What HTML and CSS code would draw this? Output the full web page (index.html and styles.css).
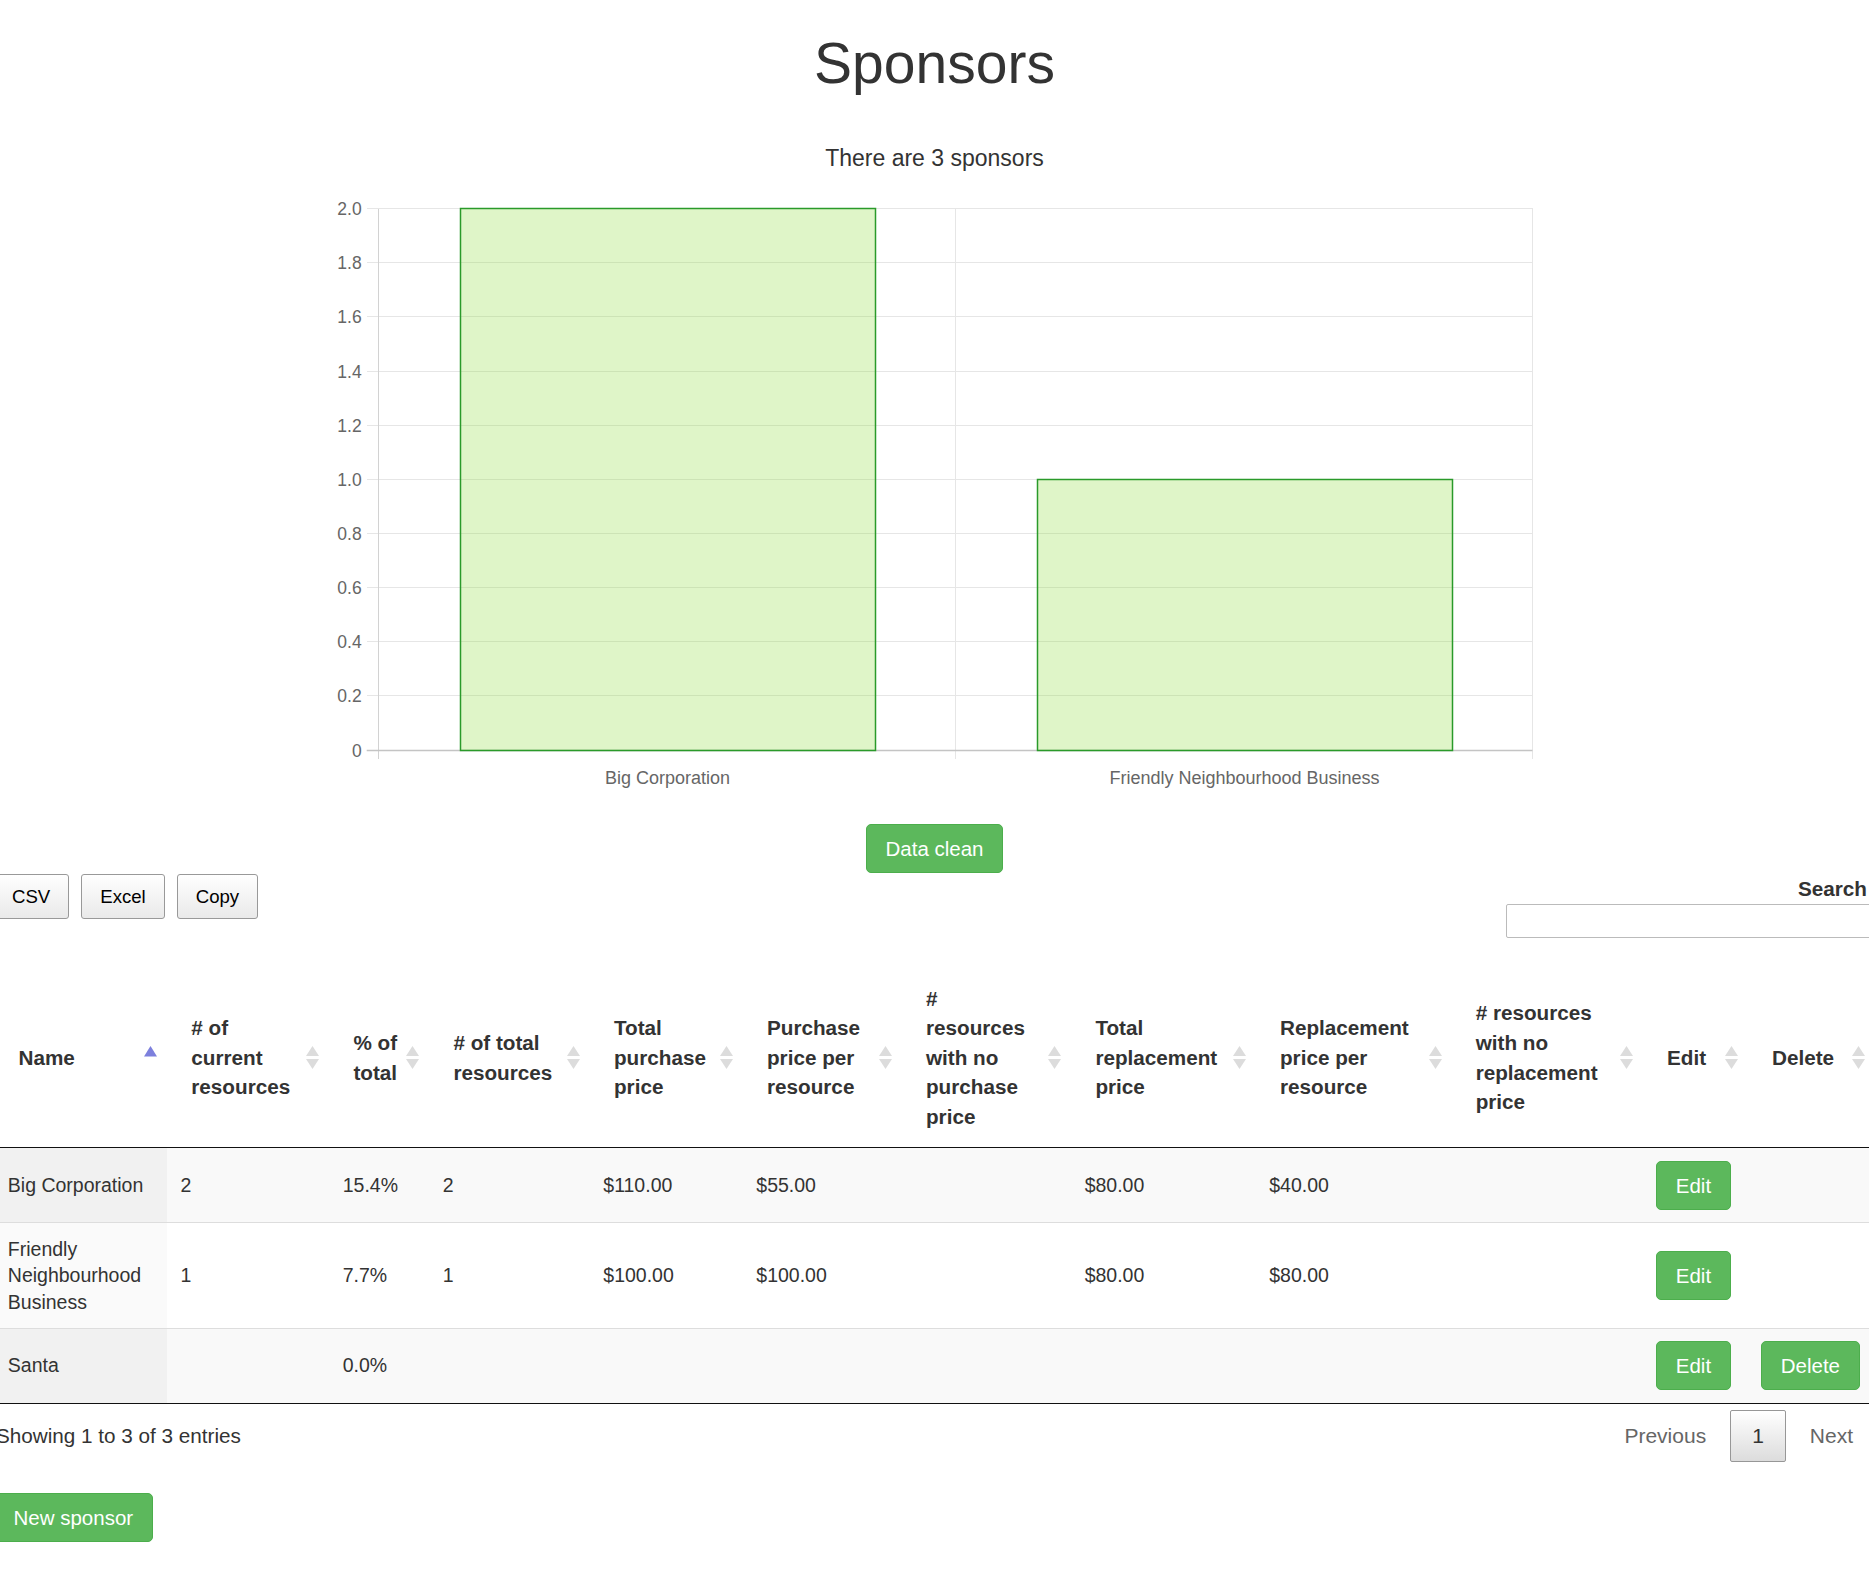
FILE: index.html
```html
<!DOCTYPE html>
<html lang="en">
<head>
  <meta charset="UTF-8" />
  <title>Sponsors</title>
  <link rel="stylesheet" href="styles.css">
</head>
<body>
  <h1 class="page-title">Sponsors</h1>

  <div class="chart">
    <p class="chart-title">There are 3 sponsors</p>
    <svg width="1300" height="620" viewBox="0 0 1300 620">
      <g class="grid">
        <line x1="81.7" y1="18.5" x2="1247.5" y2="18.5" />
        <line x1="81.7" y1="72.5" x2="1247.5" y2="72.5" />
        <line x1="81.7" y1="126.5" x2="1247.5" y2="126.5" />
        <line x1="81.7" y1="181.5" x2="1247.5" y2="181.5" />
        <line x1="81.7" y1="235.5" x2="1247.5" y2="235.5" />
        <line x1="81.7" y1="289.5" x2="1247.5" y2="289.5" />
        <line x1="81.7" y1="343.5" x2="1247.5" y2="343.5" />
        <line x1="81.7" y1="397.5" x2="1247.5" y2="397.5" />
        <line x1="81.7" y1="451.5" x2="1247.5" y2="451.5" />
        <line x1="81.7" y1="505.5" x2="1247.5" y2="505.5" />
        <line x1="670.5" y1="18.5" x2="670.5" y2="569" />
        <line x1="1247.5" y1="18.5" x2="1247.5" y2="569" />
      </g>
      <line class="axis" x1="93.5" y1="18.5" x2="93.5" y2="569" />
      <line class="zero" x1="81.7" y1="560.5" x2="1247.5" y2="560.5" />

      <rect class="bar" x="175.5" y="18.5" width="415" height="542" />
      <rect class="bar" x="752.5" y="289.5" width="415" height="271" />

      <g class="ticks-y">
        <text x="76.7" y="24.5">2.0</text>
        <text x="76.7" y="78.5">1.8</text>
        <text x="76.7" y="132.5">1.6</text>
        <text x="76.7" y="187.5">1.4</text>
        <text x="76.7" y="241.5">1.2</text>
        <text x="76.7" y="295.5">1.0</text>
        <text x="76.7" y="349.5">0.8</text>
        <text x="76.7" y="403.5">0.6</text>
        <text x="76.7" y="457.5">0.4</text>
        <text x="76.7" y="511.5">0.2</text>
        <text x="76.7" y="566.5">0</text>
      </g>
      <g class="ticks-x">
        <text x="382.5" y="594">Big Corporation</text>
        <text x="959.5" y="594">Friendly Neighbourhood Business</text>
      </g>
    </svg>
  </div>

  <div class="actions">
    <a href="#" class="btn btn-green">Data clean</a>
  </div>

  <div class="table-wrap">
    <div class="table-top">
      <div class="dt-buttons">
        <button class="dt-button">CSV</button>
        <button class="dt-button">Excel</button>
        <button class="dt-button">Copy</button>
      </div>
      <div class="dt-filter">
        <label for="search">Search</label>
        <input type="search" id="search" />
      </div>
    </div>

    <table class="sponsors">
      <colgroup>
        <col style="width: 172.8px">
        <col style="width: 162.1px">
        <col style="width: 100px">
        <col style="width: 160.6px">
        <col style="width: 153px">
        <col style="width: 159px">
        <col style="width: 169.4px">
        <col style="width: 184.6px">
        <col style="width: 195.7px">
        <col style="width: 191.3px">
        <col style="width: 105px">
        <col>
      </colgroup>
      <thead>
        <tr>
          <th>Name<span class="sort"><svg width="13" height="23" viewBox="0 0 13 23"><path d="M0 10.5 L6.5 0 L13 10.5Z" fill="#7d80dd"/></svg></span></th>
          <th># of<br>current<br>resources<span class="sort"><svg width="13" height="23" viewBox="0 0 13 23"><path d="M0 10 L6.5 0 L13 10Z" fill="#dcdcdc"/><path d="M0 13 L6.5 23 L13 13Z" fill="#dcdcdc"/></svg></span></th>
          <th>% of<br>total<span class="sort"><svg width="13" height="23" viewBox="0 0 13 23"><path d="M0 10 L6.5 0 L13 10Z" fill="#dcdcdc"/><path d="M0 13 L6.5 23 L13 13Z" fill="#dcdcdc"/></svg></span></th>
          <th># of total<br>resources<span class="sort"><svg width="13" height="23" viewBox="0 0 13 23"><path d="M0 10 L6.5 0 L13 10Z" fill="#dcdcdc"/><path d="M0 13 L6.5 23 L13 13Z" fill="#dcdcdc"/></svg></span></th>
          <th>Total<br>purchase<br>price<span class="sort"><svg width="13" height="23" viewBox="0 0 13 23"><path d="M0 10 L6.5 0 L13 10Z" fill="#dcdcdc"/><path d="M0 13 L6.5 23 L13 13Z" fill="#dcdcdc"/></svg></span></th>
          <th>Purchase<br>price per<br>resource<span class="sort"><svg width="13" height="23" viewBox="0 0 13 23"><path d="M0 10 L6.5 0 L13 10Z" fill="#dcdcdc"/><path d="M0 13 L6.5 23 L13 13Z" fill="#dcdcdc"/></svg></span></th>
          <th>#<br>resources<br>with no<br>purchase<br>price<span class="sort"><svg width="13" height="23" viewBox="0 0 13 23"><path d="M0 10 L6.5 0 L13 10Z" fill="#dcdcdc"/><path d="M0 13 L6.5 23 L13 13Z" fill="#dcdcdc"/></svg></span></th>
          <th>Total<br>replacement<br>price<span class="sort"><svg width="13" height="23" viewBox="0 0 13 23"><path d="M0 10 L6.5 0 L13 10Z" fill="#dcdcdc"/><path d="M0 13 L6.5 23 L13 13Z" fill="#dcdcdc"/></svg></span></th>
          <th>Replacement<br>price per<br>resource<span class="sort"><svg width="13" height="23" viewBox="0 0 13 23"><path d="M0 10 L6.5 0 L13 10Z" fill="#dcdcdc"/><path d="M0 13 L6.5 23 L13 13Z" fill="#dcdcdc"/></svg></span></th>
          <th># resources<br>with no<br>replacement<br>price<span class="sort"><svg width="13" height="23" viewBox="0 0 13 23"><path d="M0 10 L6.5 0 L13 10Z" fill="#dcdcdc"/><path d="M0 13 L6.5 23 L13 13Z" fill="#dcdcdc"/></svg></span></th>
          <th>Edit<span class="sort"><svg width="13" height="23" viewBox="0 0 13 23"><path d="M0 10 L6.5 0 L13 10Z" fill="#dcdcdc"/><path d="M0 13 L6.5 23 L13 13Z" fill="#dcdcdc"/></svg></span></th>
          <th>Delete<span class="sort"><svg width="13" height="23" viewBox="0 0 13 23"><path d="M0 10 L6.5 0 L13 10Z" fill="#dcdcdc"/><path d="M0 13 L6.5 23 L13 13Z" fill="#dcdcdc"/></svg></span></th>
        </tr>
      </thead>
      <tbody>
        <tr class="odd">
          <td class="sorted">Big Corporation</td>
          <td>2</td>
          <td>15.4%</td>
          <td>2</td>
          <td>$110.00</td>
          <td>$55.00</td>
          <td></td>
          <td>$80.00</td>
          <td>$40.00</td>
          <td></td>
          <td><a href="#" class="btn btn-green">Edit</a></td>
          <td></td>
        </tr>
        <tr class="even">
          <td class="sorted">Friendly Neighbourhood Business</td>
          <td>1</td>
          <td>7.7%</td>
          <td>1</td>
          <td>$100.00</td>
          <td>$100.00</td>
          <td></td>
          <td>$80.00</td>
          <td>$80.00</td>
          <td></td>
          <td><a href="#" class="btn btn-green">Edit</a></td>
          <td></td>
        </tr>
        <tr class="odd">
          <td class="sorted">Santa</td>
          <td></td>
          <td>0.0%</td>
          <td></td>
          <td></td>
          <td></td>
          <td></td>
          <td></td>
          <td></td>
          <td></td>
          <td><a href="#" class="btn btn-green">Edit</a></td>
          <td><a href="#" class="btn btn-green">Delete</a></td>
        </tr>
      </tbody>
    </table>

    <div class="table-bottom">
      <div class="info">Showing 1 to 3 of 3 entries</div>
      <div class="paginate">
        <a class="page-link">Previous</a>
        <a class="page-link current">1</a>
        <a class="page-link">Next</a>
      </div>
    </div>
  </div>

  <div class="footer-actions">
    <a href="#" class="btn btn-green">New sponsor</a>
  </div>
</body>
</html>
```

FILE: styles.css
```css
html, body {
  margin: 0;
  overflow-x: hidden;
}

body {
  font-family: "Liberation Sans", Arial, Helvetica, sans-serif;
  font-size: 19.5px;
  line-height: 26.5px;
  color: #333;
  background-color: #fff;
}

.page-title {
  margin: 0;
  padding-top: 32px;
  font-size: 57px;
  line-height: 63px;
  font-weight: normal;
  text-align: center;
  color: #333;
}

/* chart */
.chart-title {
  margin: 50px 0 0;
  font-size: 23px;
  line-height: 26px;
  text-align: center;
  color: #333;
}

.chart svg {
  display: block;
  margin: 19px auto 0;
}

.chart .grid line {
  stroke: #e6e6e6;
  stroke-width: 1;
  shape-rendering: crispEdges;
}

.chart .axis {
  stroke: #d2d2d2;
  stroke-width: 1;
  shape-rendering: crispEdges;
}

.chart .zero {
  stroke: #c4c4c4;
  stroke-width: 1.5;
}

.chart .bar {
  fill: rgba(148, 222, 72, 0.3);
  stroke: #2a9a2a;
  stroke-width: 1.5;
}

.chart text {
  font-family: "Liberation Sans", Arial, sans-serif;
  fill: #666;
}

.ticks-y text {
  font-size: 17.5px;
  text-anchor: end;
}

.ticks-x text {
  font-size: 18px;
  text-anchor: middle;
}

/* buttons */
.actions {
  display: flex;
  justify-content: center;
  margin-top: 14px;
  margin-bottom: 1px;
}

.btn {
  display: inline-block;
  font-size: 20.5px;
  line-height: 27px;
  padding: 10px 18.5px;
  border-radius: 5px;
  text-decoration: none;
  white-space: nowrap;
}

.btn-green {
  background-color: #5cb85c;
  border: 1px solid #4cae4c;
  color: white;
}

/* table */
.table-wrap {
  margin: 0 -6px 0 -5.5px;
}

.table-top {
  display: flex;
  justify-content: space-between;
  align-items: flex-start;
}

.dt-buttons {
  display: flex;
  gap: 12px;
  margin-left: -1.5px;
}

.dt-button {
  font-family: inherit;
  font-size: 18.6px;
  line-height: 25.3px;
  padding: 9px 18px;
  border: 1px solid #999;
  border-radius: 3px;
  background: linear-gradient(to bottom, #fff 0%, #e9e9e9 100%);
  color: #000;
}

.dt-filter {
  display: flex;
  flex-direction: column;
  align-items: flex-end;
}

.dt-filter label {
  font-weight: bold;
  font-size: 20.7px;
  line-height: 29.6px;
  padding-right: 8px;
}

.dt-filter input {
  box-sizing: border-box;
  width: 369.5px;
  height: 34.5px;
  border: 1px solid #bbb;
  border-radius: 2px;
  padding: 5px;
  background-color: #fff;
}

.sponsors {
  width: 100%;
  table-layout: fixed;
  border-collapse: separate;
  border-spacing: 0;
  margin-top: 30px;
}

.sponsors th {
  position: relative;
  padding: 15.5px 31px 15.5px 24px;
  font-size: 20.7px;
  line-height: 29.6px;
  font-weight: bold;
  text-align: left;
  vertical-align: middle;
  white-space: nowrap;
  border-bottom: 1px solid #111;
  color: #333;
}

.sort {
  position: absolute;
  right: 10px;
  top: 50%;
  margin-top: -11.5px;
  width: 13px;
  height: 23px;
  line-height: 0;
}

.sponsors td {
  padding: 12.5px 13.3px;
  vertical-align: middle;
  line-height: 26.5px;
  border-top: 1px solid #ddd;
}

.sponsors tbody tr:first-child td {
  border-top: none;
}

.sponsors tbody tr:last-child td {
  border-bottom: 1px solid #111;
}

.sponsors tr.odd td {
  background-color: #f9f9f9;
}

.sponsors tr.odd td.sorted {
  background-color: #f1f1f1;
}

.sponsors tr.even td.sorted {
  background-color: #fafafa;
}

.table-bottom {
  display: flex;
  justify-content: space-between;
  align-items: flex-start;
}

.info {
  padding-top: 19px;
  padding-left: 1.5px;
  font-size: 20.7px;
}

.paginate {
  display: flex;
  align-items: center;
  padding-top: 6px;
}

.page-link {
  font-size: 21px;
  line-height: 29.5px;
  padding: 10.5px 21px;
  margin-left: 2px;
  border: 1px solid transparent;
  border-radius: 2px;
  color: #666;
}

.page-link.current {
  border-color: #979797;
  background: linear-gradient(to bottom, #fff 0%, #dcdcdc 100%);
  color: #333;
}

.footer-actions {
  margin: 31px 0 40px -6px;
}
```
